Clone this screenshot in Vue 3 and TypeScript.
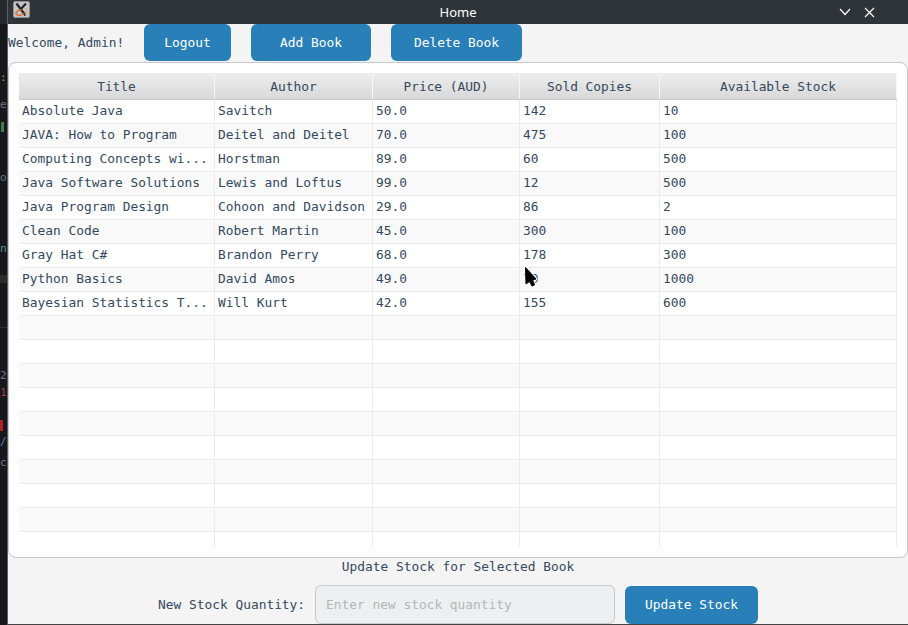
<script setup lang="ts">
interface Book {
  title: string
  author: string
  price: string
  sold: string
  stock: string
}

const columns = ['Title', 'Author', 'Price (AUD)', 'Sold Copies', 'Available Stock']

const books: Book[] = [
  { title: 'Absolute Java', author: 'Savitch', price: '50.0', sold: '142', stock: '10' },
  { title: 'JAVA: How to Program', author: 'Deitel and Deitel', price: '70.0', sold: '475', stock: '100' },
  { title: 'Computing Concepts wi...', author: 'Horstman', price: '89.0', sold: '60', stock: '500' },
  { title: 'Java Software Solutions', author: 'Lewis and Loftus', price: '99.0', sold: '12', stock: '500' },
  { title: 'Java Program Design', author: 'Cohoon and Davidson', price: '29.0', sold: '86', stock: '2' },
  { title: 'Clean Code', author: 'Robert Martin', price: '45.0', sold: '300', stock: '100' },
  { title: 'Gray Hat C#', author: 'Brandon Perry', price: '68.0', sold: '178', stock: '300' },
  { title: 'Python Basics', author: 'David Amos', price: '49.0', sold: '70', stock: '1000' },
  { title: 'Bayesian Statistics T...', author: 'Will Kurt', price: '42.0', sold: '155', stock: '600' }
]

const emptyRows = 10
</script>

<template>
  <div class="desktop">
    <!-- editor window showing behind the app, only a sliver is visible -->
    <div class="backdrop">
      <span class="frag orange" style="top: 70px">:</span>
      <span class="frag" style="top: 97px">e</span>
      <span class="block green" style="top: 122px; height: 10px"></span>
      <span class="frag" style="top: 170px">o</span>
      <span class="frag teal" style="top: 241px">n</span>
      <span class="band"></span>
      <span class="rule"></span>
      <span class="frag" style="top: 368px">2</span>
      <span class="frag red" style="top: 385px">1</span>
      <span class="block red-block" style="top: 420px; height: 11px"></span>
      <span class="frag blue" style="top: 434px">/</span>
      <span class="frag" style="top: 455px">c</span>
    </div>
    <div class="window">
      <header class="titlebar">
        <span class="app-icon">
          <svg width="17" height="17" viewBox="0 0 17 17">
            <rect x="0.5" y="0.5" width="16" height="16" rx="1.5" fill="#c4c4c4" stroke="#8f8f8f" />
            <path d="M3.5 2.5 L12.5 14.5 M13 2.5 L7 9" stroke="#26262a" stroke-width="2.2" fill="none" />
            <path d="M8.5 9 C4 9 2 12 3.5 13.5 C5 15 9 14.5 11 12.5" stroke="#e2682a" stroke-width="1.3" fill="none" />
            <path d="M12.5 7 C14 9 14 12 12 14" stroke="#e8a15f" stroke-width="1" fill="none" />
          </svg>
        </span>
        <span class="title">Home</span>
        <span class="win-buttons">
          <svg width="12" height="8" viewBox="0 0 12 8"><path d="M1 1 L6 6.5 L11 1" stroke="#fff" stroke-width="1.2" fill="none" /></svg>
          <svg width="11" height="11" viewBox="0 0 11 11"><path d="M1 1 L10 10 M10 1 L1 10" stroke="#fff" stroke-width="1.2" fill="none" /></svg>
        </span>
      </header>

      <div class="content">
        <div class="toolbar">
          <span class="welcome">Welcome, Admin!</span>
          <button class="btn logout">Logout</button>
          <button class="btn add">Add Book</button>
          <button class="btn del">Delete Book</button>
        </div>

        <section class="card">
          <div class="table">
            <div class="row head">
              <div v-for="c in columns" :key="c" class="cell">{{ c }}</div>
            </div>
            <div v-for="b in books" :key="b.title" class="row">
              <div class="cell">{{ b.title }}</div>
              <div class="cell">{{ b.author }}</div>
              <div class="cell">{{ b.price }}</div>
              <div class="cell">{{ b.sold }}</div>
              <div class="cell">{{ b.stock }}</div>
            </div>
            <div v-for="i in emptyRows" :key="i" class="row">
              <div v-for="c in columns" :key="c" class="cell"></div>
            </div>
          </div>
        </section>

        <div class="update-title">Update Stock for Selected Book</div>
        <div class="update-row">
          <label class="qty-label">New Stock Quantity:</label>
          <input class="qty-input" placeholder="Enter new stock quantity" />
          <button class="btn update">Update Stock</button>
        </div>
      </div>
    </div>

    <svg class="cursor" width="16" height="24" viewBox="0 0 16 24">
      <path d="M1.5 1.5 L2 18 L5.5 15.5 L8 20 L10.5 19 L8.6 14 L12 13 Z" fill="#fff" stroke="#fff" stroke-width="3" stroke-linejoin="round" opacity="0.8" />
      <path d="M1.5 1.5 L2 18 L5.5 15.5 L8 20 L10.5 19 L8.6 14 L12 13 Z" fill="#000" stroke="#000" stroke-width="1" stroke-linejoin="round" />
    </svg>
  </div>
</template>

<style>
html,
body {
  margin: 0;
  overflow: hidden;
}
</style>

<style scoped>
.desktop {
  position: relative;
  display: flex;
  width: 908px;
  height: 625px;
  overflow: hidden;
  background: #16181b;
  font-family: "DejaVu Sans Mono", monospace;
  font-size: 12.87px;
  color: #34495e;
}

.backdrop {
  position: relative;
  width: 7px;
  flex-shrink: 0;
  overflow: hidden;
  background: linear-gradient(#25292c 0, #25292c 24px, #16181b 24px);
}

.frag {
  position: absolute;
  left: 0;
  font-size: 11px;
  line-height: 16px;
  color: #6e7780;
}

.orange {
  color: #c98a3a;
}

.teal {
  color: #5f8f8a;
}

.red {
  color: #a33a3a;
}

.blue {
  color: #5b7fc4;
}

.block {
  position: absolute;
  left: 0;
  width: 2px;
}

.green {
  left: 1px;
  width: 3px;
  background: #3f7d4f;
}

.red-block {
  width: 3px;
  background: #b3201f;
}

.band {
  position: absolute;
  left: 0;
  right: 0;
  top: 275px;
  height: 8px;
  background: #2b2c2e;
}

.rule {
  position: absolute;
  left: 0;
  right: 0;
  top: 327px;
  height: 1px;
  background: #2d2f32;
}

.window {
  flex: 1;
  display: flex;
  flex-direction: column;
  box-sizing: border-box;
  border-left: 1px solid #5c5f62;
  border-bottom: 1px solid #444;
  min-width: 0;
}

.titlebar {
  position: relative;
  height: 24px;
  flex-shrink: 0;
  display: flex;
  align-items: center;
  background: #2f343a;
  color: #fff;
  font-family: "Noto Sans", sans-serif;
  font-size: 13px;
}

.app-icon {
  display: flex;
  align-self: flex-start;
  margin-top: 1px;
  margin-left: 5px;
}

.title {
  position: absolute;
  left: 0;
  right: 0;
  text-align: center;
}

.win-buttons {
  margin-left: auto;
  display: flex;
  align-items: center;
  gap: 13px;
  margin-right: 33px;
}

.content {
  flex: 1;
  background: #f4f4f4;
  display: flex;
  flex-direction: column;
  align-items: stretch;
  min-height: 0;
}

.toolbar {
  height: 38px;
  display: flex;
  align-items: flex-start;
  flex-shrink: 0;
}

.welcome {
  line-height: 37px;
  width: 136px;
  flex-shrink: 0;
}

.btn {
  border: none;
  border-radius: 6px;
  background: #2980b9;
  color: #fff;
  font: inherit;
  padding: 0;
  height: 37px;
}

.logout {
  width: 87px;
}

.add {
  width: 120px;
  margin-left: 20px;
}

.del {
  width: 131px;
  margin-left: 20px;
}

.card {
  height: 496px;
  flex-shrink: 0;
  box-sizing: border-box;
  padding: 10px 10px 0;
  background: #fff;
  border: 1px solid #c8c8c8;
  border-radius: 8px;
}

.table {
  display: flex;
  flex-direction: column;
}

.row {
  display: grid;
  grid-template-columns: 196px 158px 147px 140px 237px;
  height: 24px;
  box-sizing: border-box;
  border-bottom: 1px solid #ececec;
}

.row:nth-child(odd) {
  background: #f9f9f9;
}

.row:last-child {
  border-bottom: none;
  height: 15px;
}

.row.head {
  height: 27px;
  background: linear-gradient(#ededed, #d9d9d9);
  border-bottom: 1px solid #c8c8c8;
}

.cell {
  box-sizing: border-box;
  padding-left: 3px;
  line-height: 22px;
  white-space: nowrap;
  overflow: hidden;
  border-right: 1px solid #ececec;
}

.head .cell {
  padding-left: 0;
  text-align: center;
  line-height: 27px;
  border-right-color: #f6f6f6;
}

.update-title {
  height: 28px;
  line-height: 17px;
  text-align: center;
  flex-shrink: 0;
}

.update-row {
  display: flex;
  align-items: flex-start;
  flex-shrink: 0;
}

.qty-label {
  margin-left: 150px;
  line-height: 38px;
  width: 157px;
  flex-shrink: 0;
}

.qty-input {
  box-sizing: border-box;
  width: 300px;
  height: 39px;
  margin-top: -1px;
  padding: 0 10px;
  border: 1px solid #c5cacc;
  border-radius: 6px;
  background: #ecf0f1;
  font: inherit;
  color: #34495e;
  outline: none;
}

.qty-input::placeholder {
  color: #b4b7b8;
  opacity: 1;
}

.update {
  width: 133px;
  height: 38px;
  padding-bottom: 2px;
  margin-left: 10px;
}

.cursor {
  position: absolute;
  left: 524px;
  top: 266px;
}
</style>
